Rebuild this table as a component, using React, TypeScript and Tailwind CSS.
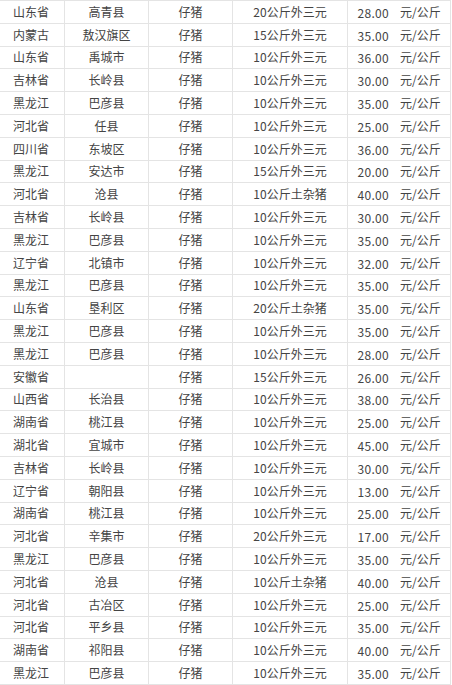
const rows: [string, string, string, string, string][] = [
  ["山东省", "高青县", "仔猪", "20公斤外三元", "28.00"],
  ["内蒙古", "敖汉旗区", "仔猪", "15公斤外三元", "35.00"],
  ["山东省", "禹城市", "仔猪", "10公斤外三元", "36.00"],
  ["吉林省", "长岭县", "仔猪", "10公斤外三元", "30.00"],
  ["黑龙江", "巴彦县", "仔猪", "10公斤外三元", "35.00"],
  ["河北省", "任县", "仔猪", "10公斤外三元", "25.00"],
  ["四川省", "东坡区", "仔猪", "10公斤外三元", "36.00"],
  ["黑龙江", "安达市", "仔猪", "15公斤外三元", "20.00"],
  ["河北省", "沧县", "仔猪", "10公斤土杂猪", "40.00"],
  ["吉林省", "长岭县", "仔猪", "10公斤外三元", "30.00"],
  ["黑龙江", "巴彦县", "仔猪", "10公斤外三元", "35.00"],
  ["辽宁省", "北镇市", "仔猪", "10公斤外三元", "32.00"],
  ["黑龙江", "巴彦县", "仔猪", "10公斤外三元", "35.00"],
  ["山东省", "垦利区", "仔猪", "20公斤土杂猪", "35.00"],
  ["黑龙江", "巴彦县", "仔猪", "10公斤外三元", "35.00"],
  ["黑龙江", "巴彦县", "仔猪", "10公斤外三元", "28.00"],
  ["安徽省", "", "仔猪", "15公斤外三元", "26.00"],
  ["山西省", "长治县", "仔猪", "10公斤外三元", "38.00"],
  ["湖南省", "桃江县", "仔猪", "10公斤外三元", "25.00"],
  ["湖北省", "宜城市", "仔猪", "10公斤外三元", "45.00"],
  ["吉林省", "长岭县", "仔猪", "10公斤外三元", "30.00"],
  ["辽宁省", "朝阳县", "仔猪", "10公斤外三元", "13.00"],
  ["湖南省", "桃江县", "仔猪", "10公斤外三元", "25.00"],
  ["河北省", "辛集市", "仔猪", "20公斤外三元", "17.00"],
  ["黑龙江", "巴彦县", "仔猪", "10公斤外三元", "35.00"],
  ["河北省", "沧县", "仔猪", "10公斤土杂猪", "40.00"],
  ["河北省", "古冶区", "仔猪", "10公斤外三元", "25.00"],
  ["河北省", "平乡县", "仔猪", "10公斤外三元", "35.00"],
  ["湖南省", "祁阳县", "仔猪", "10公斤外三元", "40.00"],
  ["黑龙江", "巴彦县", "仔猪", "10公斤外三元", "35.00"],
];

export default function App() {
  return (
    <div
      className="w-[452px] h-[685px] overflow-hidden bg-white text-[12px] text-[#444]"
      style={{ fontFamily: '"Noto Sans CJK SC", "Noto Sans", sans-serif' }}
    >
      <div className="w-[451px] border-t border-[#e4e4e4]">
        {rows.map((r, i) => (
          <div
            key={i}
            className="grid grid-cols-[65px_84px_84px_115px_103px] h-[22.8px] border-b border-[#e4e4e4] leading-none"
          >
            <div className="flex items-center justify-center border-r border-[#e4e4e4] pr-[2px]">{r[0]}</div>
            <div className="flex items-center justify-center border-r border-[#e4e4e4]">{r[1]}</div>
            <div className="flex items-center justify-center border-r border-[#e4e4e4]">{r[2]}</div>
            <div className="flex items-center justify-center border-r border-[#e4e4e4]">{r[3]}</div>
            <div className="flex items-center border-r border-[#e4e4e4]">
              <span className="w-[41px] text-right tracking-[0.3px] pt-[2px]">{r[4]}</span>
              <span className="ml-[11px]">元/公斤</span>
            </div>
          </div>
        ))}
      </div>
    </div>
  );
}
